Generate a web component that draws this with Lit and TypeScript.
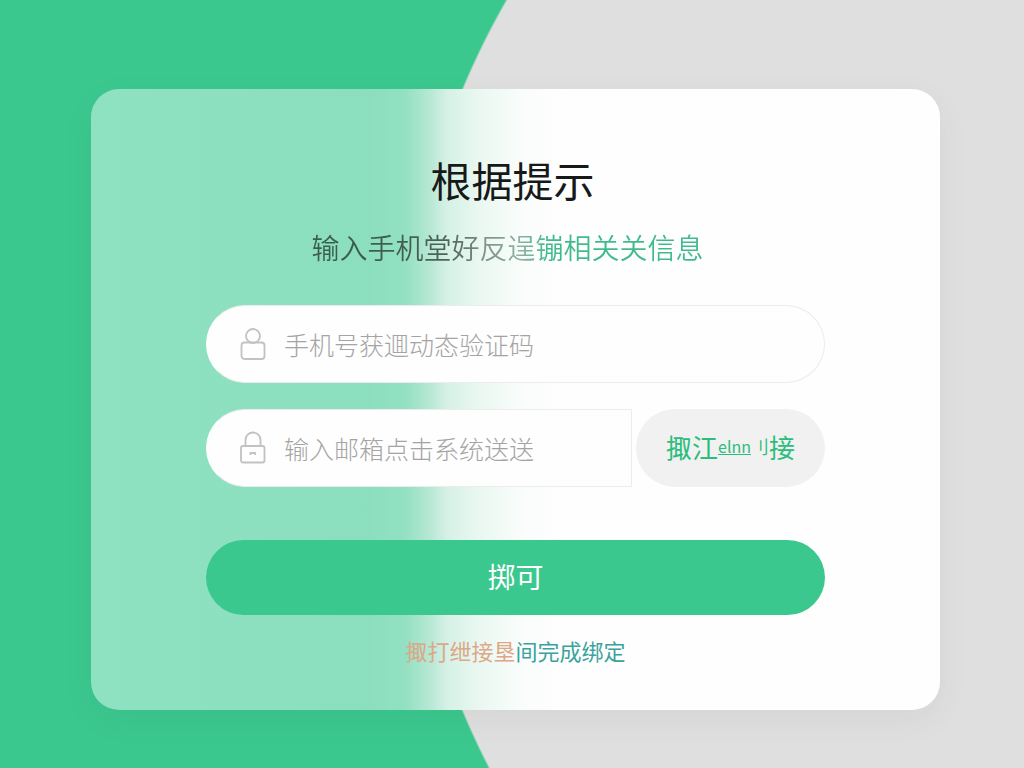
import { LitElement, html, css } from "lit";
import { customElement } from "lit/decorators.js";

@customElement("app-root")
export class AppRoot extends LitElement {
  static styles = css`
    :host {
      display: grid;
      place-items: center;
      box-sizing: border-box;
      min-height: 100vh;
      padding: 89px 84px 58px 91px;
      font-family: "Noto Sans CJK SC", "Liberation Sans", sans-serif;
      background: radial-gradient(
        circle at calc(50% + 692px) calc(50% + 16px),
        #dfdfdf 803px,
        #3bc88f 805px
      );
    }
    .card {
      box-sizing: border-box;
      width: 100%;
      max-width: 849px;
      padding: 60px 115px 44px;
      border-radius: 28px;
      background: linear-gradient(
        90deg,
        #8ee1c1 0,
        #8bdfbf 33%,
        #93e0c2 37%,
        #b8e8d5 40%,
        #d6f1e6 42%,
        #ebf8f2 46%,
        #fafdfb 51%,
        #fefefe 56%
      );
      box-shadow: 0 10px 32px rgba(60, 60, 60, 0.06);
    }
    form {
      display: flex;
      flex-direction: column;
    }
    h1 {
      margin: 0 6px 0 0;
      font-size: 41px;
      line-height: 60px;
      font-weight: 400;
      text-align: center;
      color: #161918;
    }
    .lead {
      margin: 17px 16px 37px 0;
      font-size: 28px;
      line-height: 42px;
      font-weight: 350;
      text-align: center;
      color: transparent;
      background: linear-gradient(
        90deg,
        #3c5c50 27%,
        #4c625a 40%,
        #7f9189 46%,
        #8fb0a2 52%,
        #3fba8c 57%
      );
      background-clip: text;
      -webkit-background-clip: text;
    }
    .field {
      display: flex;
      align-items: center;
      box-sizing: border-box;
      height: 78px;
      padding: 0 31px;
      gap: 16px;
      border: 1px solid #ececec;
      border-left-color: #fefefe;
      border-radius: 40px;
      background: #fefefe;
    }
    .field svg {
      flex: none;
      width: 30px;
      height: 36px;
      fill: none;
      stroke: #c2c2c2;
      stroke-width: 1.8;
    }
    .field input {
      flex: 1;
      min-width: 0;
      padding: 0;
      border: 0;
      outline: 0;
      background: none;
      font: 300 25px/40px "Noto Sans CJK SC", sans-serif;
      color: #666;
    }
    .field input::placeholder {
      color: #a4a4a4;
      opacity: 1;
    }
    .row {
      display: flex;
      gap: 4px;
      margin-top: 26px;
    }
    .row .field {
      flex: 1;
      border-radius: 40px 0 0 40px;
    }
    button {
      border: 0;
      border-radius: 40px;
      font-family: inherit;
      cursor: pointer;
    }
    .code {
      display: flex;
      align-items: center;
      justify-content: center;
      width: 189px;
      padding: 0 0 4px;
      background: #f1f1f1;
      font-size: 26px;
      color: #2cbd7c;
    }
    .tiny {
      font-size: 16px;
      text-decoration: underline;
    }
    .narrow {
      font-size: 18px;
    }
    .submit {
      height: 75px;
      margin-top: 53px;
      padding: 0 0 4px;
      background: #3bc88f;
      font-size: 28px;
      color: #fff;
    }
    .help {
      align-self: center;
      margin-top: 19px;
      font-size: 22px;
      line-height: 32px;
      color: #3aa39b;
      text-decoration: none;
    }
    .warm {
      color: #dda887;
    }
  `;

  render() {
    return html`
      <main class="card">
        <form @submit=${(e: Event) => e.preventDefault()}>
          <h1>根据提示</h1>
          <p class="lead">输入手机堂好<span lang="ja">反</span>逞镚相关关信息</p>
          <label class="field">
            <svg viewBox="0 0 30 36" aria-hidden="true">
              <circle cx="15" cy="10" r="7" />
              <rect x="3.500" y="16.500" width="23" height="16.500" rx="3" />
            </svg>
            <input type="tel" aria-label="手机号" placeholder="手机号获逥动态验证码" />
          </label>
          <div class="row">
            <label class="field">
              <svg viewBox="0 0 30 36" aria-hidden="true">
                <path d="M7.500 16V10a7.500 7.500 0 0 1 15 0v6" />
                <rect x="3" y="16" width="23.500" height="16.500" rx="2" />
                <path d="M12.500 25v-2h4.500v2" />
              </svg>
              <input type="text" aria-label="邮箱" placeholder="输入邮箱点击系统送送" />
            </label>
            <button class="code" type="button">掫江<span class="tiny">elnn</span><span class="narrow">刂</span>接</button>
          </div>
          <button class="submit" type="submit">掷可</button>
          <a class="help" href="#"><span class="warm">掫打绁接垦</span>间完成绑定</a>
        </form>
      </main>
    `;
  }
}
